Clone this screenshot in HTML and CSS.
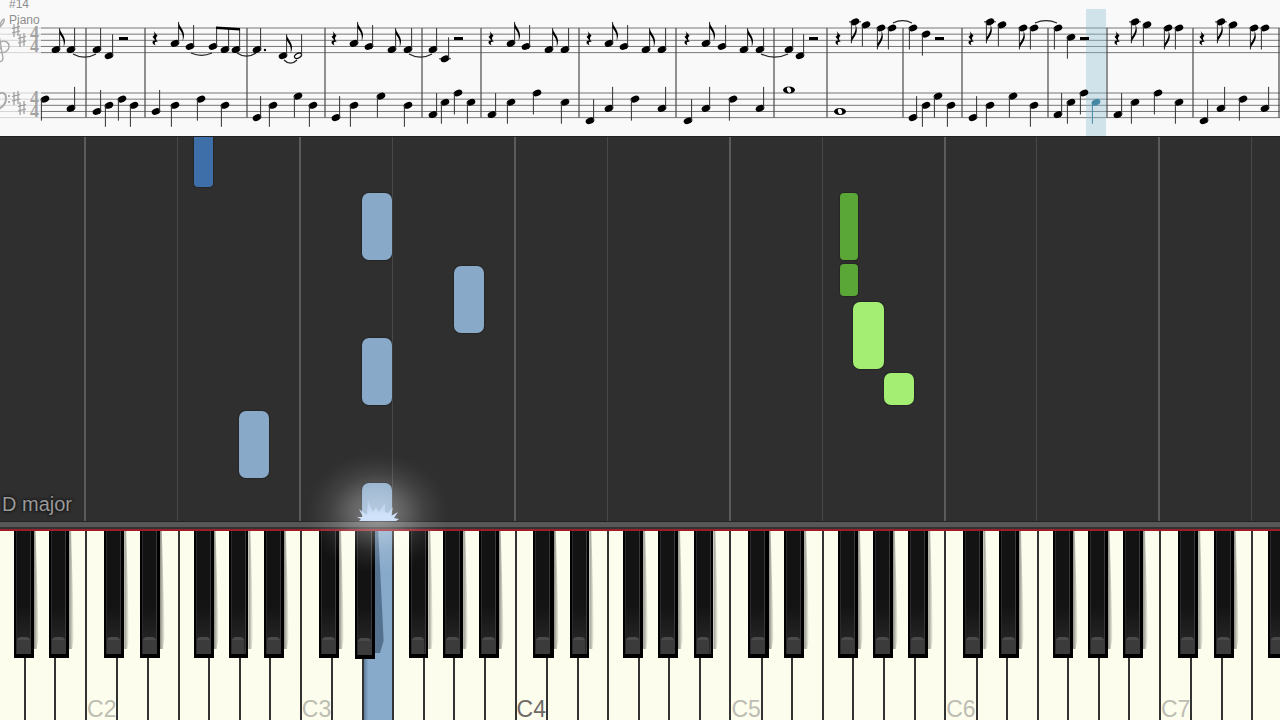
FILE: index.html
```html
<!DOCTYPE html>
<html lang="en">
<head>
<meta charset="UTF-8">
<title>Piano roll</title>
<link rel="stylesheet" href="styles.css">
</head>
<body>
<header class="score">
  <svg id="sheet" class="sheet" viewBox="0 0 1280 136" role="img" aria-label="Sheet music">
    <defs>
      <g id="head"><ellipse rx="4.500" ry="3.100" transform="rotate(-24)"/></g>
      <g id="half"><ellipse rx="3.8" ry="2.300" transform="rotate(-28)" fill="none" stroke="#000" stroke-width="1.100"/></g>
      <g id="whole"><ellipse rx="6" ry="3.500"/><ellipse rx="2" ry="2.800" fill="#f9f9f9" transform="rotate(-20)"/></g>
      <path id="flag" d="M0 0C.6 4.500 5 7.500 5.400 12.500C5.500 14.500 5 17 4 19C4.500 16 4.300 13 3 10.500C2 8.500 1 7 0 6z"/>
      <path id="rest" d="M-1.500-8L2.500-3.200C.5-1.500.5 0 2.800 3.200C0 2.200-1.200 3.500.6 6.600C-3.800 4.800-3.200 1 .4 1.600L-2.500-2.200C-.2-3.600 0-5.500-1.500-8z"/>
      <path id="sharp" d="M-2-6v13M2-7v13M-4-1.500l8-2M-4 3l8-2" fill="none" stroke="#999" stroke-width="1.200"/>
    </defs>
  </svg>
</header>

<main class="roll" id="roll">
  <ol class="lanes" id="lanes"></ol>
  <p class="scale">D major</p>
</main>

<section class="keyboard">
  <div class="rail"></div>
  <ol class="keys" id="keys"></ol>
  <svg class="spark" viewBox="0 0 160 140" aria-hidden="true">
    <defs>
      <radialGradient id="glow">
        <stop offset="0" stop-color="#fff" stop-opacity=".4"/>
        <stop offset=".35" stop-color="#fff" stop-opacity=".25"/>
        <stop offset=".65" stop-color="#fff" stop-opacity=".09"/>
        <stop offset=".85" stop-color="#fff" stop-opacity=".03"/>
        <stop offset="1" stop-color="#fff" stop-opacity="0"/>
      </radialGradient>
      <linearGradient id="flare" x2="0" y2="1">
        <stop offset="0" stop-color="#bcd3ee" stop-opacity=".6"/>
        <stop offset=".7" stop-color="#cfe2fa"/>
      </linearGradient>
    </defs>
    <ellipse cx="79" cy="62" rx="72" ry="60" fill="url(#glow)"/>
    <path fill="url(#flare)" d="M61 70L63 68L59 66L65 66L61 58L69 64L70 49L75 61L78 56L81 61L87 52L87 61L90 62L95 56L93 65L100 61L96 67L101 68L98 70z"/>
  </svg>
</section>

<script>
var NS = 'http://www.w3.org/2000/svg';
var sheet = document.getElementById('sheet');

function add(tag, attrs, text) {
  var el = document.createElementNS(NS, tag);
  for (var k in attrs) el.setAttribute(k, attrs[k]);
  if (text) el.textContent = text;
  sheet.appendChild(el);
}
function line(x1, y1, x2, y2, cls) { add('line', {x1: x1, y1: y1, x2: x2, y2: y2, class: cls}); }
function use(id, x, y, cls) { add('use', {href: '#' + id, x: x, y: y, class: cls || ''}); }

var TREBLE = 28, BASS = 93, STEP = 3.08;

// staves, faded on the left behind the clefs
[TREBLE, BASS].forEach(function (top) {
  for (var i = 0; i < 5; i++) {
    var y = top + i * 2 * STEP;
    line(0, y, 41, y, 'staff faded');
    line(41, y, 1280, y, 'staff');
  }
});
[86, 145, 247, 325, 422, 481, 579, 676, 774, 827, 903, 962, 1048, 1107, 1193, 1279].forEach(function (x) {
  line(x, 28, x, 117.6, 'bar');
});
add('rect', {x: 1086, y: 9, width: 20, height: 127, class: 'playhead'});

// clefs, key and time signatures
add('path', {d: 'M-1 28C2 25 5 21 4 19C1 20-2 28-1 35L3 58C3 62-2 63-3 60M-2 52C4 54 9 51 9 46C9 42 4 40 1 42C-2 44-1 48 1 49M-1 28C-3 32-6 35-7 39', class: 'clef'});
add('path', {d: 'M-3 95C2 91 6 93 6 98C6 104 2 108-4 110', class: 'clef bold'});
add('circle', {cx: 9, cy: 96, r: 1, class: 'faint'});
add('circle', {cx: 9, cy: 102, r: 1, class: 'faint'});
use('sharp', 16, 30); use('sharp', 22, 40);
use('sharp', 16, 98); use('sharp', 22, 108);
[39, 52, 104, 117].forEach(function (y) { add('text', {x: 30, y: y, class: 'meter'}, '4'); });
add('text', {x: 9, y: 8, class: 'label'}, '#14');
add('text', {x: 9, y: 24, class: 'label'}, 'Piano');

// [x, staff step from the top line, kind]
var treble = [
  [56,7,'e'],[71,7],[97,7],[109,9],[175,5,'e'],[190,6],[213,6,'b'],[225,7,'b'],[236,7,'b'],[257,7],[283,9,'e'],[298,9,'h'],
  [354,5,'e'],[369,6],[392,7,'e'],[408,7],[433,7],[445,10],
  [511,5,'e'],[526,6],[549,7,'e'],[565,7],[609,5,'e'],[624,6],[646,7,'e'],[662,7],
  [706,5,'e'],[722,6],[744,7,'e'],[760,7],[789,7],[800,9],
  [855,-2,'e'],[866,-1],[881,0,'e'],[892,0],[913,0],[926,2],
  [990,-2,'e'],[1002,-1],[1023,0,'e'],[1034,0],[1058,0],[1071,3],
  [1135,-2,'e'],[1147,-1],[1168,0,'e'],[1179,0],[1221,-2,'e'],[1233,-1],[1254,0,'e'],[1265,0]
];
var bass = [
  [45,2],[71,5],[97,6],[109,4],[122,2],[134,4],[156,6],[175,4],[201,2],[225,4],[257,8],[273,4],[298,1],[313,4],
  [336,8],[354,4],[381,1],[408,4],[433,7],[445,3],[458,0],[471,3],[492,7],[511,3],[537,0],[565,3],
  [590,9],[609,5],[635,2],[662,5],[688,9],[706,5],[733,2],[760,5],[789,-1,'w'],[840,6,'w'],
  [913,8],[926,4],[938,1],[951,4],[973,8],[990,4],[1013,1],[1034,4],[1058,7],[1071,3],[1084,0],[1096,3,'now'],
  [1118,7],[1135,3],[1158,0],[1179,3],[1204,9],[1221,5],[1243,2],[1265,5]
];

function draw(notes, top) {
  notes.forEach(function (n) {
    var x = n[0], y = top + n[1] * STEP, kind = n[2], up = n[1] >= 5;
    if (kind === 'w') { use('whole', x, y); return; }
    if (top === TREBLE && (n[1] < -1 || n[1] > 9)) line(x - 6, y, x + 6, y, 'ledger');
    use(kind === 'h' ? 'half' : 'head', x, y, kind === 'now' ? 'now' : '');
    var sx = up ? x + 3.6 : x - 3.6, tip = up ? y - 21.5 : y + 21.5;
    if (kind === 'b') tip = TREBLE;
    line(sx, y, sx, tip, kind === 'now' ? 'stem now' : 'stem');
    if (kind === 'e') {
      add('use', {href: '#flag', transform: 'translate(' + sx + ' ' + tip + ') scale(1 ' + (up ? 1 : -1) + ')'});
    }
  });
}
draw(treble, TREBLE);
draw(bass, BASS);
add('path', {d: 'M216 26.500L240 28V30.500L216 29z'});
add('circle', {cx: 265, cy: 50, r: 1.2});

[155, 334, 491, 589, 687, 838, 971, 1117, 1202].forEach(function (x) { use('rest', x, 39); });
[123, 458, 813, 939, 1084].forEach(function (x) { add('rect', {x: x - 4, y: 37, width: 9, height: 3}); });

// ties: from, to, y, bow
[[73,96,54,4],[191,212,53,3],[237,256,53,4],[284,297,60,4],[409,432,54,4],[761,788,54,4],[893,912,23,-3],[1035,1057,23,-3]].forEach(function (t) {
  add('path', {d: 'M' + t[0] + ' ' + t[2] + 'Q' + (t[0] + t[1]) / 2 + ' ' + (t[2] + t[3] * 1.6) + ' ' + t[1] + ' ' + t[2], class: 'tie'});
});

// 42 white keys, G1 to F7
var lanes = document.getElementById('lanes'), keys = document.getElementById('keys');
var names = 'CDEFGAB';
for (var i = 0; i < 42; i++) {
  var name = names[(i + 4) % 7], octave = Math.floor((i + 4) / 7) + 1, note = name + octave;
  var lane = document.createElement('li');
  lane.className = 'lane lane-' + name.toLowerCase();
  lanes.appendChild(lane);

  var key = document.createElement('li');
  key.className = 'key';
  var html = '<button class="white' + (note === 'E3' ? ' pressed' : '') + (note === 'C4' ? ' middle' : '') + '" aria-label="' + note + '">' + (name === 'C' ? note : '') + '</button>';
  if ('CDFGA'.indexOf(name) >= 0) {
    html += '<button class="black ' + name.toLowerCase() + '-sharp' + (note === 'D3' ? ' lit' : '') + '" aria-label="' + name + '#' + octave + '"></button>';
  }
  key.innerHTML = html;
  keys.appendChild(key);
}

// falling notes: x, y, width, height, colour
[
  [194,-21,19,71,'blue-dark'],[362,56,30,67,'blue'],[454,129,30,67,'blue'],[362,201,30,67,'blue'],
  [239,274,30,67,'blue'],[362,346,30,50,'blue'],
  [840,56,18,67,'green-dark'],[840,127,18,32,'green-dark'],[853,165,31,67,'green'],[884,236,30,32,'green']
].forEach(function (n) {
  var el = document.createElement('div');
  el.className = 'note ' + n[4];
  el.style.left = n[0] / 12.8 + '%';
  el.style.width = n[2] / 12.8 + '%';
  el.style.top = n[1] + 'px';
  el.style.height = n[3] + 'px';
  document.getElementById('roll').appendChild(el);
});
</script>
</body>
</html>
```
FILE: styles.css
```css
*{box-sizing:border-box;}
body{margin:0;min-height:100vh;display:flex;flex-direction:column;overflow:hidden;background:#2f2f2f;font-family:"Liberation Sans",Arial,sans-serif;}
ol{list-style:none;margin:0;padding:0;}

/* sheet music */
.score{background:#f9f9f9;border-bottom:1px solid #222;}
.sheet{display:block;width:100%;height:auto;}
.staff{stroke:#777;stroke-width:1;}
.staff.faded{stroke:#d4d4d4;}
.bar{stroke:#4a4a4a;stroke-width:1.2;}
.stem{stroke:#333;stroke-width:1;}
.ledger{stroke:#333;stroke-width:1;}
.tie{fill:none;stroke:#222;stroke-width:1.2;}
.clef{fill:none;stroke:#aaa;stroke-width:1.4;}
.clef.bold{stroke-width:2;}
.faint{fill:#999;}
.label{font:12px "Liberation Sans",Arial,sans-serif;fill:#8f8f8f;}
.meter{font:bold 18px "Liberation Serif",serif;fill:#a3a3a3;}
.playhead{fill:#8dbfd4;fill-opacity:.38;}
.now{fill:#4489a3;}
.stem.now{stroke:#4489a3;}

/* falling notes */
.roll{position:relative;flex:1;min-height:384px;overflow:hidden;background:#2f2f2f;}
.lanes,.keys{display:flex;width:100.7%;margin-left:-0.52%;}
.lanes{position:absolute;top:0;bottom:0;left:0;}
.lane{flex:1;}
.lane-c{border-left:2px solid #5b5b5b;}
.lane-f{border-left:1px solid #484848;}
.scale{position:absolute;left:2px;bottom:3px;margin:0;font-size:20px;line-height:28px;color:#999;text-shadow:0 0 3px #111,0 0 3px #111;}
.note{position:absolute;border-radius:7px;box-shadow:0 0 1px 1px rgba(0,0,0,.2);}
.blue{background:#89a9c9;}
.blue-dark{background:#3f6fa9;border-radius:4px;}
.green{background:#a3ee73;}
.green-dark{background:#5aa637;border-radius:4px;}

/* keyboard */
.keyboard{position:relative;}
.rail{height:10px;background:linear-gradient(#222 0 1px,#575757 1px 6px,#333 6px 8px,#9a1f2b 8px);}
.key{position:relative;flex:1;height:189px;}
.white,.black{display:block;border:0;padding:0;cursor:pointer;}
.white{width:100%;height:100%;background:#fdfdee;border-left:2px solid #333;display:flex;align-items:flex-end;font:23px "Liberation Sans",Arial,sans-serif;color:#bdbdb2;line-height:21px;white-space:nowrap;}
.white.middle{color:#6f6b66;}
.white.pressed{background:linear-gradient(90deg,#5f7d9c,#88aaca 16%);}
.black{position:absolute;top:0;z-index:1;width:65%;height:127px;background:linear-gradient(90deg,#000 2px,#2a2a2a 2px 3px,transparent 3px 16px,#3a3a3a 16px 17px,#000 17px),linear-gradient(#131313 60%,#2b2b2b);border-bottom:4px solid #000;}
.black::before{content:"";position:absolute;left:3px;right:4px;bottom:0;height:14px;border-radius:4px 4px 0 0;background:#3b3b3b;border-top:3px solid #4a4a4a;}
.black::after{content:"";position:absolute;left:100%;top:0;width:5px;height:118px;background:linear-gradient(90deg,rgba(0,0,0,.45),rgba(0,0,0,0));clip-path:polygon(0 0,40% 0,100% 90%,60% 100%,0 100%);}
.black.lit{height:128px;}
.black.lit::after{width:9px;height:122px;background:rgba(50,75,105,.6);}
.c-sharp{left:60%;}
.d-sharp{left:77%;}
.f-sharp{left:53%;}
.g-sharp{left:67%;}
.a-sharp{left:83%;}
.spark{position:absolute;z-index:2;left:23.3%;top:-70px;width:160px;height:140px;pointer-events:none;}
```
